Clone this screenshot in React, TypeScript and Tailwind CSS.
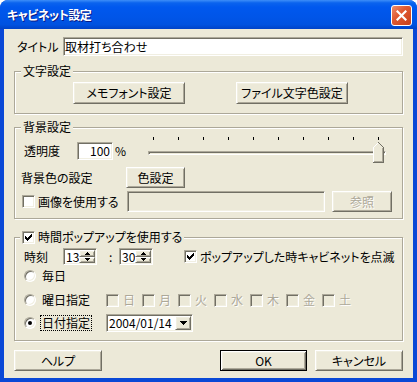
import React from "react";

const font = "font-['Noto_Sans_CJK_JP','Noto_Sans',sans-serif] [font-feature-settings:'palt']";
const raised =
  "border border-t-white border-l-white border-r-[#716F64] border-b-[#716F64] shadow-[inset_1px_1px_0_#F1EFE2,inset_-1px_-1px_0_#ACA899] bg-[#ECE9D8]";
const raisedDefault =
  "border border-black shadow-[inset_1px_1px_0_#fff,inset_-1px_-1px_0_#716F64,inset_2px_2px_0_#F1EFE2,inset_-2px_-2px_0_#ACA899] bg-[#ECE9D8]";
const sunken =
  "border border-t-[#ACA899] border-l-[#ACA899] border-r-white border-b-white shadow-[inset_1px_1px_0_#716F64,inset_-1px_-1px_0_#F1EFE2]";
const greyed = "text-[#ACA899] [text-shadow:1px_1px_0_#fff]";
const group = "relative border border-[#ACA899] shadow-[inset_1px_1px_0_#fff,1px_1px_0_#fff]";

function Button({ label, className = "", def = false, disabled = false }: { label: string; className?: string; def?: boolean; disabled?: boolean }) {
  return (
    <div className={`flex items-center justify-center shrink-0 ${def ? raisedDefault : raised} ${className}`}>
      <span className={`leading-[14px] ${disabled ? greyed : ""}`}>{label}</span>
    </div>
  );
}

function CheckMark() {
  return (
    <svg width="7" height="7" viewBox="0 0 7 7" shapeRendering="crispEdges">
      <path d="M0 2 L2 4 L7 -1 L7 2 L2 7 L0 5 Z" fill="#000" />
    </svg>
  );
}

function Check({ checked = false, disabled = false }: { checked?: boolean; disabled?: boolean }) {
  return (
    <span className={`w-[13px] h-[13px] shrink-0 flex items-center justify-center ${sunken} ${disabled ? "bg-[#ECE9D8]" : "bg-white"}`}>
      {checked && <CheckMark />}
    </span>
  );
}

function Radio({ checked = false }: { checked?: boolean }) {
  return (
    <span className="w-[12px] h-[12px] rounded-full shrink-0 flex items-center justify-center bg-white border border-t-[#ACA899] border-l-[#ACA899] border-r-white border-b-white shadow-[inset_1px_1px_0_#716F64,inset_-1px_-1px_0_#F1EFE2]">
      {checked && <span className="w-[4px] h-[4px] rounded-full bg-black" />}
    </span>
  );
}

function Arrow({ down = false }: { down?: boolean }) {
  return (
    <svg width="5" height="3" viewBox="0 0 5 3" shapeRendering="crispEdges">
      <path d={down ? "M0 0 H5 L2.5 3 Z" : "M0 3 H5 L2.5 0 Z"} fill="#000" />
    </svg>
  );
}

function Spin({ value }: { value: string }) {
  return (
    <div className={`flex w-[34px] h-[17px] bg-white p-[1px] ${sunken}`}>
      <span className="flex-1 leading-[13px] pl-[1px]">{value}</span>
      <div className="flex flex-col w-[16px]">
        <div className={`flex-1 flex items-center justify-center ${raised}`}>
          <Arrow />
        </div>
        <div className={`flex-1 flex items-center justify-center ${raised}`}>
          <Arrow down />
        </div>
      </div>
    </div>
  );
}

function Thumb() {
  return (
    <svg width="11" height="21" viewBox="0 0 11 21" shapeRendering="crispEdges">
      <polygon points="0,21 0,5 5.5,0 11,5 11,21" fill="#ECE9D8" />
      <polyline points="0.5,20 0.5,5.5 5.5,0.5" fill="none" stroke="#fff" />
      <polyline points="5.5,0.5 10.5,5.5 10.5,20.5 0,20.5" fill="none" stroke="#716F64" />
      <polyline points="9.5,6 9.5,19.5 1,19.5" fill="none" stroke="#ACA899" />
    </svg>
  );
}

const days = ["日", "月", "火", "水", "木", "金", "土"];

export default function App() {
  return (
    <div className={`w-[417px] h-[382px] flex flex-col rounded-t-[8px] overflow-hidden bg-[#0A48D6] text-[12px] text-black ${font}`}>
      {/* title bar */}
      <div className="h-[29px] shrink-0 flex items-center justify-between pl-[7px] pr-[5px] bg-[linear-gradient(to_bottom,#3D8EF8_0%,#0A63EE_10%,#0058EE_25%,#0055E8_60%,#0052E0_85%,#0043C8_100%)]">
        <span className="text-white font-bold text-[12px] leading-[16px] tracking-[-0.5px] [text-shadow:1px_1px_0_#0A1883]">キャビネット設定</span>
        <div className="w-[21px] h-[21px] mt-[2px] rounded-[3px] border border-white flex items-center justify-center bg-[linear-gradient(135deg,#EE8F6E_0%,#E05A33_40%,#C9401A_100%)]">
          <svg width="11" height="11" viewBox="0 0 11 11">
            <path d="M1.5 1.5 L9.5 9.5 M9.5 1.5 L1.5 9.5" stroke="#fff" strokeWidth="2.2" strokeLinecap="square" />
          </svg>
        </div>
      </div>

      {/* client area */}
      <div className="flex-1 mx-[4px] mb-[4px] bg-[#ECE9D8] px-[10px] flex flex-col">
        {/* title */}
        <div className="mt-[8px] h-[19px] flex items-center">
          <span className="w-[49px] pl-[3px] shrink-0">タイトル</span>
          <div className={`flex-1 h-[19px] bg-white pl-[1px] flex items-center ${sunken}`}>
            <span className="leading-[14px]">取材打ち合わせ</span>
          </div>
        </div>

        {/* 文字設定 */}
        <div className={`mt-[15px] ${group}`}>
          <span className="absolute left-[6px] top-[-8px] px-[2px] bg-[#ECE9D8] leading-[14px]">文字設定</span>
          <div className="flex pt-[10px] pb-[9px] pl-[58px] gap-[51px]">
            <Button label="メモフォント設定" className="w-[112px] h-[22px]" />
            <Button label="ファイル文字色設定" className="w-[112px] h-[22px]" />
          </div>
        </div>

        {/* 背景設定 */}
        <div className={`mt-[13px] ${group}`}>
          <span className="absolute left-[6px] top-[-8px] px-[2px] bg-[#ECE9D8] leading-[14px]">背景設定</span>
          <div className="mt-[8px] h-[27px] flex">
            <div className="self-end mb-[3px] flex items-center">
              <span className="w-[62px] pl-[9px] shrink-0">透明度</span>
              <div className={`w-[36px] h-[18px] bg-white flex items-center justify-end pr-[2px] ${sunken}`}>
                <span className="leading-[14px]">100</span>
              </div>
              <span className="w-[35px] pl-[2px] shrink-0 leading-[14px]">%</span>
            </div>
            <div className="w-[238px] flex flex-col">
              <div className="mt-[1px] ml-[5px] w-[226px] h-[3px] flex justify-between">
                {Array.from({ length: 10 }).map((_, i) => (
                  <span key={i} className="w-[1px] h-[3px] bg-black" />
                ))}
              </div>
              <div className="relative mt-[2px] h-[21px]">
                <div className="absolute left-0 right-0 top-[9px] h-[4px] border border-t-[#ACA899] border-l-[#ACA899] border-r-white border-b-white shadow-[inset_1px_1px_0_#716F64]" />
                <div className="absolute left-[225px] top-0">
                  <Thumb />
                </div>
              </div>
            </div>
          </div>
          <div className="mt-[4px] h-[21px] flex items-center">
            <span className="w-[111px] pl-[6px] shrink-0">背景色の設定</span>
            <Button label="色設定" className="w-[59px] h-[21px]" />
          </div>
          <div className="mt-[3px] h-[21px] flex items-center">
            <div className="w-[112px] pl-[7px] shrink-0 flex items-center gap-[3px]">
              <Check />
              <span>画像を使用する</span>
            </div>
            <div className={`w-[198px] h-[21px] bg-[#ECE9D8] ${sunken}`} />
            <Button label="参照" disabled className="ml-[7px] w-[60px] h-[21px]" />
          </div>
          <div className="h-[6px]" />
        </div>

        {/* 時間ポップアップ */}
        <div className={`mt-[18px] ${group}`}>
          <div className="absolute left-[5px] top-[-8px] px-[2px] h-[14px] bg-[#ECE9D8] flex items-center gap-[3px]">
            <Check checked />
            <span className="leading-[14px]">時間ポップアップを使用する</span>
          </div>
          <div className="mt-[10px] h-[17px] flex items-center">
            <span className="w-[48px] pl-[9px] shrink-0">時刻</span>
            <Spin value="13" />
            <span className="w-[22px] pl-[12px] shrink-0">:</span>
            <Spin value="30" />
            <div className="ml-[31px] flex items-center gap-[3px]">
              <Check checked />
              <span className="whitespace-nowrap">ポップアップした時キャビネットを点滅</span>
            </div>
          </div>
          <div className="mt-[3px] h-[16px] flex items-center pl-[9px] gap-[6px]">
            <Radio />
            <span>毎日</span>
          </div>
          <div className="mt-[8px] h-[16px] flex items-center">
            <div className="w-[91px] pl-[9px] shrink-0 flex items-center gap-[6px]">
              <Radio />
              <span>曜日指定</span>
            </div>
            {days.map((d) => (
              <div key={d} className="w-[36px] shrink-0 flex items-center gap-[4px]">
                <Check disabled />
                <span className={greyed}>{d}</span>
              </div>
            ))}
          </div>
          <div className="mt-[6px] h-[18px] flex items-center">
            <div className="w-[91px] pl-[9px] shrink-0 flex items-center gap-[4px]">
              <Radio checked />
              <span className="border border-dotted border-black px-[1px] leading-[14px]">日付指定</span>
            </div>
            <div className={`w-[87px] h-[18px] bg-white p-[1px] flex ${sunken}`}>
              <span className="flex-1 leading-[14px] pl-[1px]">2004/01/14</span>
              <div className={`w-[16px] flex items-center justify-center ${raised}`}>
                <svg width="7" height="4" viewBox="0 0 7 4" shapeRendering="crispEdges">
                  <path d="M0 0 H7 L3.5 4 Z" fill="#000" />
                </svg>
              </div>
            </div>
          </div>
          <div className="h-[8px]" />
        </div>

        {/* buttons */}
        <div className="mt-[9px] flex">
          <Button label="ヘルプ" className="w-[88px] h-[21px]" />
          <Button label="OK" def className="ml-auto w-[87px] h-[21px]" />
          <Button label="キャンセル" className="ml-[8px] w-[88px] h-[21px]" />
        </div>
      </div>
    </div>
  );
}
